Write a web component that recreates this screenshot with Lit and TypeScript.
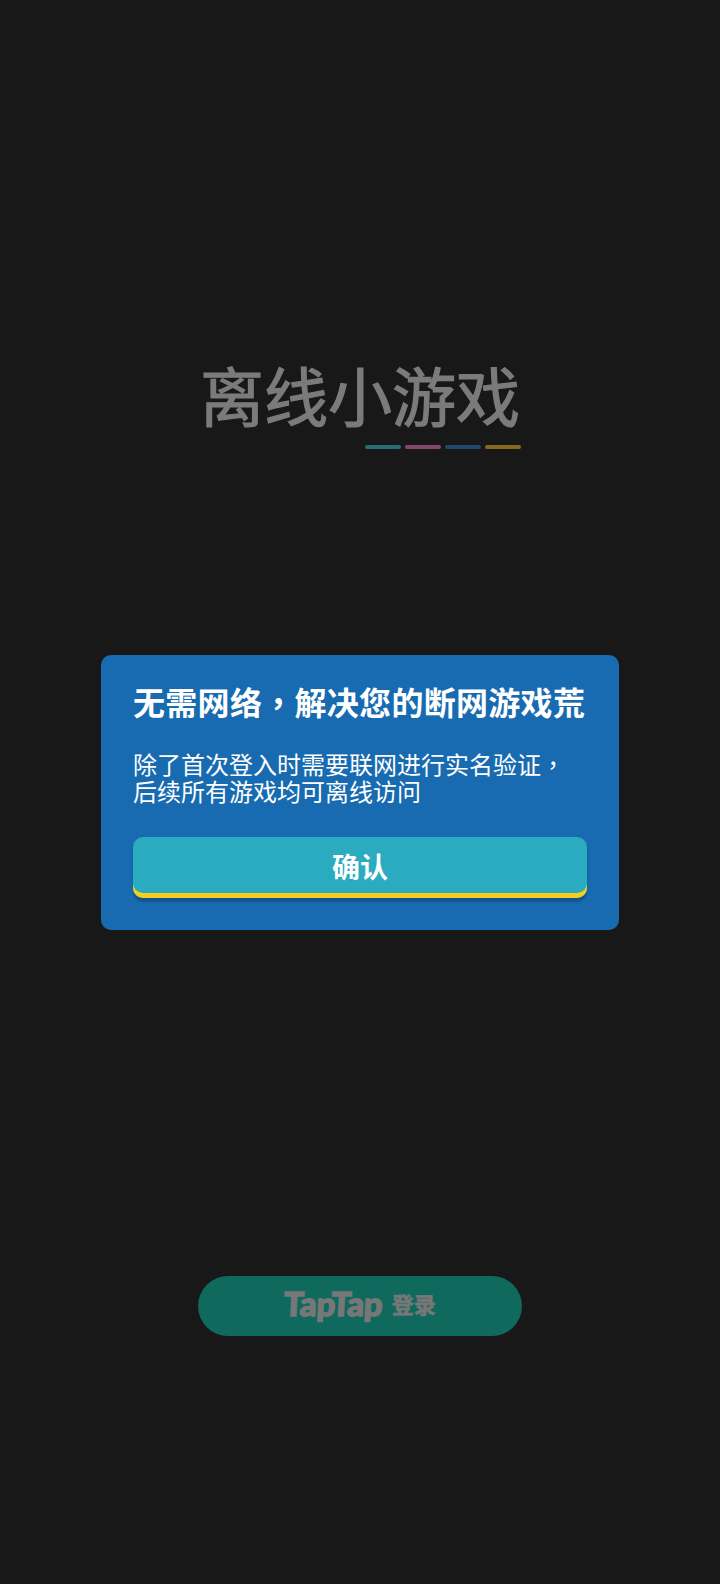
import { LitElement, html, css } from "lit";
import { customElement } from "lit/decorators.js";

@customElement("app-root")
export class AppRoot extends LitElement {
  static styles = css`
    :host {
      display: block;
      width: 720px;
      height: 1584px;
      background: #181818;
      font-family: "Noto Sans CJK SC", "Liberation Sans", sans-serif;
      overflow: hidden;
    }
    .page {
      display: flex;
      flex-direction: column;
      align-items: center;
      padding-top: 349px;
    }
    .brand {
      display: flex;
      flex-direction: column;
      align-items: flex-end;
      width: 320px;
    }
    .title {
      width: 320px;
      text-align: center;
      font-size: 64px;
      line-height: 88px;
      color: #7b7b7b;
      font-weight: 400;
      -webkit-text-stroke: 1.2px #7b7b7b;
    }
    .bars {
      display: flex;
      gap: 4px;
      margin-top: 8px;
      margin-right: -1px;
    }
    .bar {
      width: 36px;
      height: 4px;
      border-radius: 2px;
    }
    .b1 { background: #2a6a74; }
    .b2 { background: #85476f; }
    .b3 { background: #20486c; }
    .b4 { background: #86691f; }
    .card {
      box-sizing: border-box;
      width: 518px;
      height: 275px;
      margin-top: 206px;
      padding: 24px 32px 0;
      background: #186bb0;
      border-radius: 10px;
      color: #fff;
    }
    .card h1 {
      margin: 0;
      font-size: 32px;
      line-height: 44px;
      font-weight: 700;
      white-space: nowrap;
      letter-spacing: 0.3px;
    }
    .card p {
      margin: 27px 0 0;
      font-size: 24px;
      line-height: 27px;
      font-weight: 400;
    }
    .comma {
      font-family: "Noto Sans CJK TC", sans-serif;
    }
    .confirm {
      box-sizing: border-box;
      width: 454px;
      height: 61px;
      margin-top: 33px;
      display: flex;
      align-items: center;
      justify-content: center;
      padding-bottom: 4px;
      background: #2babbf;
      border-radius: 10px;
      box-shadow: inset 0 -5px 0 #f1d021, 0 4px 2px #15528c;
      font-size: 28px;
      font-weight: 700;
    }
    .login {
      box-sizing: border-box;
      width: 324px;
      height: 60px;
      margin-top: 346px;
      padding-bottom: 6px;
      border-radius: 30px;
      background: #0f6a5d;
      color: #777777;
      display: flex;
      align-items: center;
      justify-content: center;
      gap: 9px;
    }
    .tap {
      font-family: "Lato", sans-serif;
      font-size: 33px;
      font-weight: 900;
      letter-spacing: -0.3px;
      line-height: 36px;
      -webkit-text-stroke: 1.4px #777777;
      transform: skewX(-3deg);
    }
    .cn {
      font-size: 22px;
      font-weight: 700;
      line-height: 30px;
      -webkit-text-stroke: 0.6px #777777;
    }
  `;

  render() {
    return html`
      <div class="page">
        <div class="brand">
          <div class="title">离线小游戏</div>
          <div class="bars">
            <span class="bar b1"></span>
            <span class="bar b2"></span>
            <span class="bar b3"></span>
            <span class="bar b4"></span>
          </div>
        </div>
        <section class="card">
          <h1>无需网络<span class="comma">，</span>解决您的断网游戏荒</h1>
          <p>除了首次登入时需要联网进行实名验证<span class="comma">，</span><br />后续所有游戏均可离线访问</p>
          <div class="confirm">确认</div>
        </section>
        <div class="login"><span class="tap">TapTap</span><span class="cn">登录</span></div>
      </div>
    `;
  }
}
